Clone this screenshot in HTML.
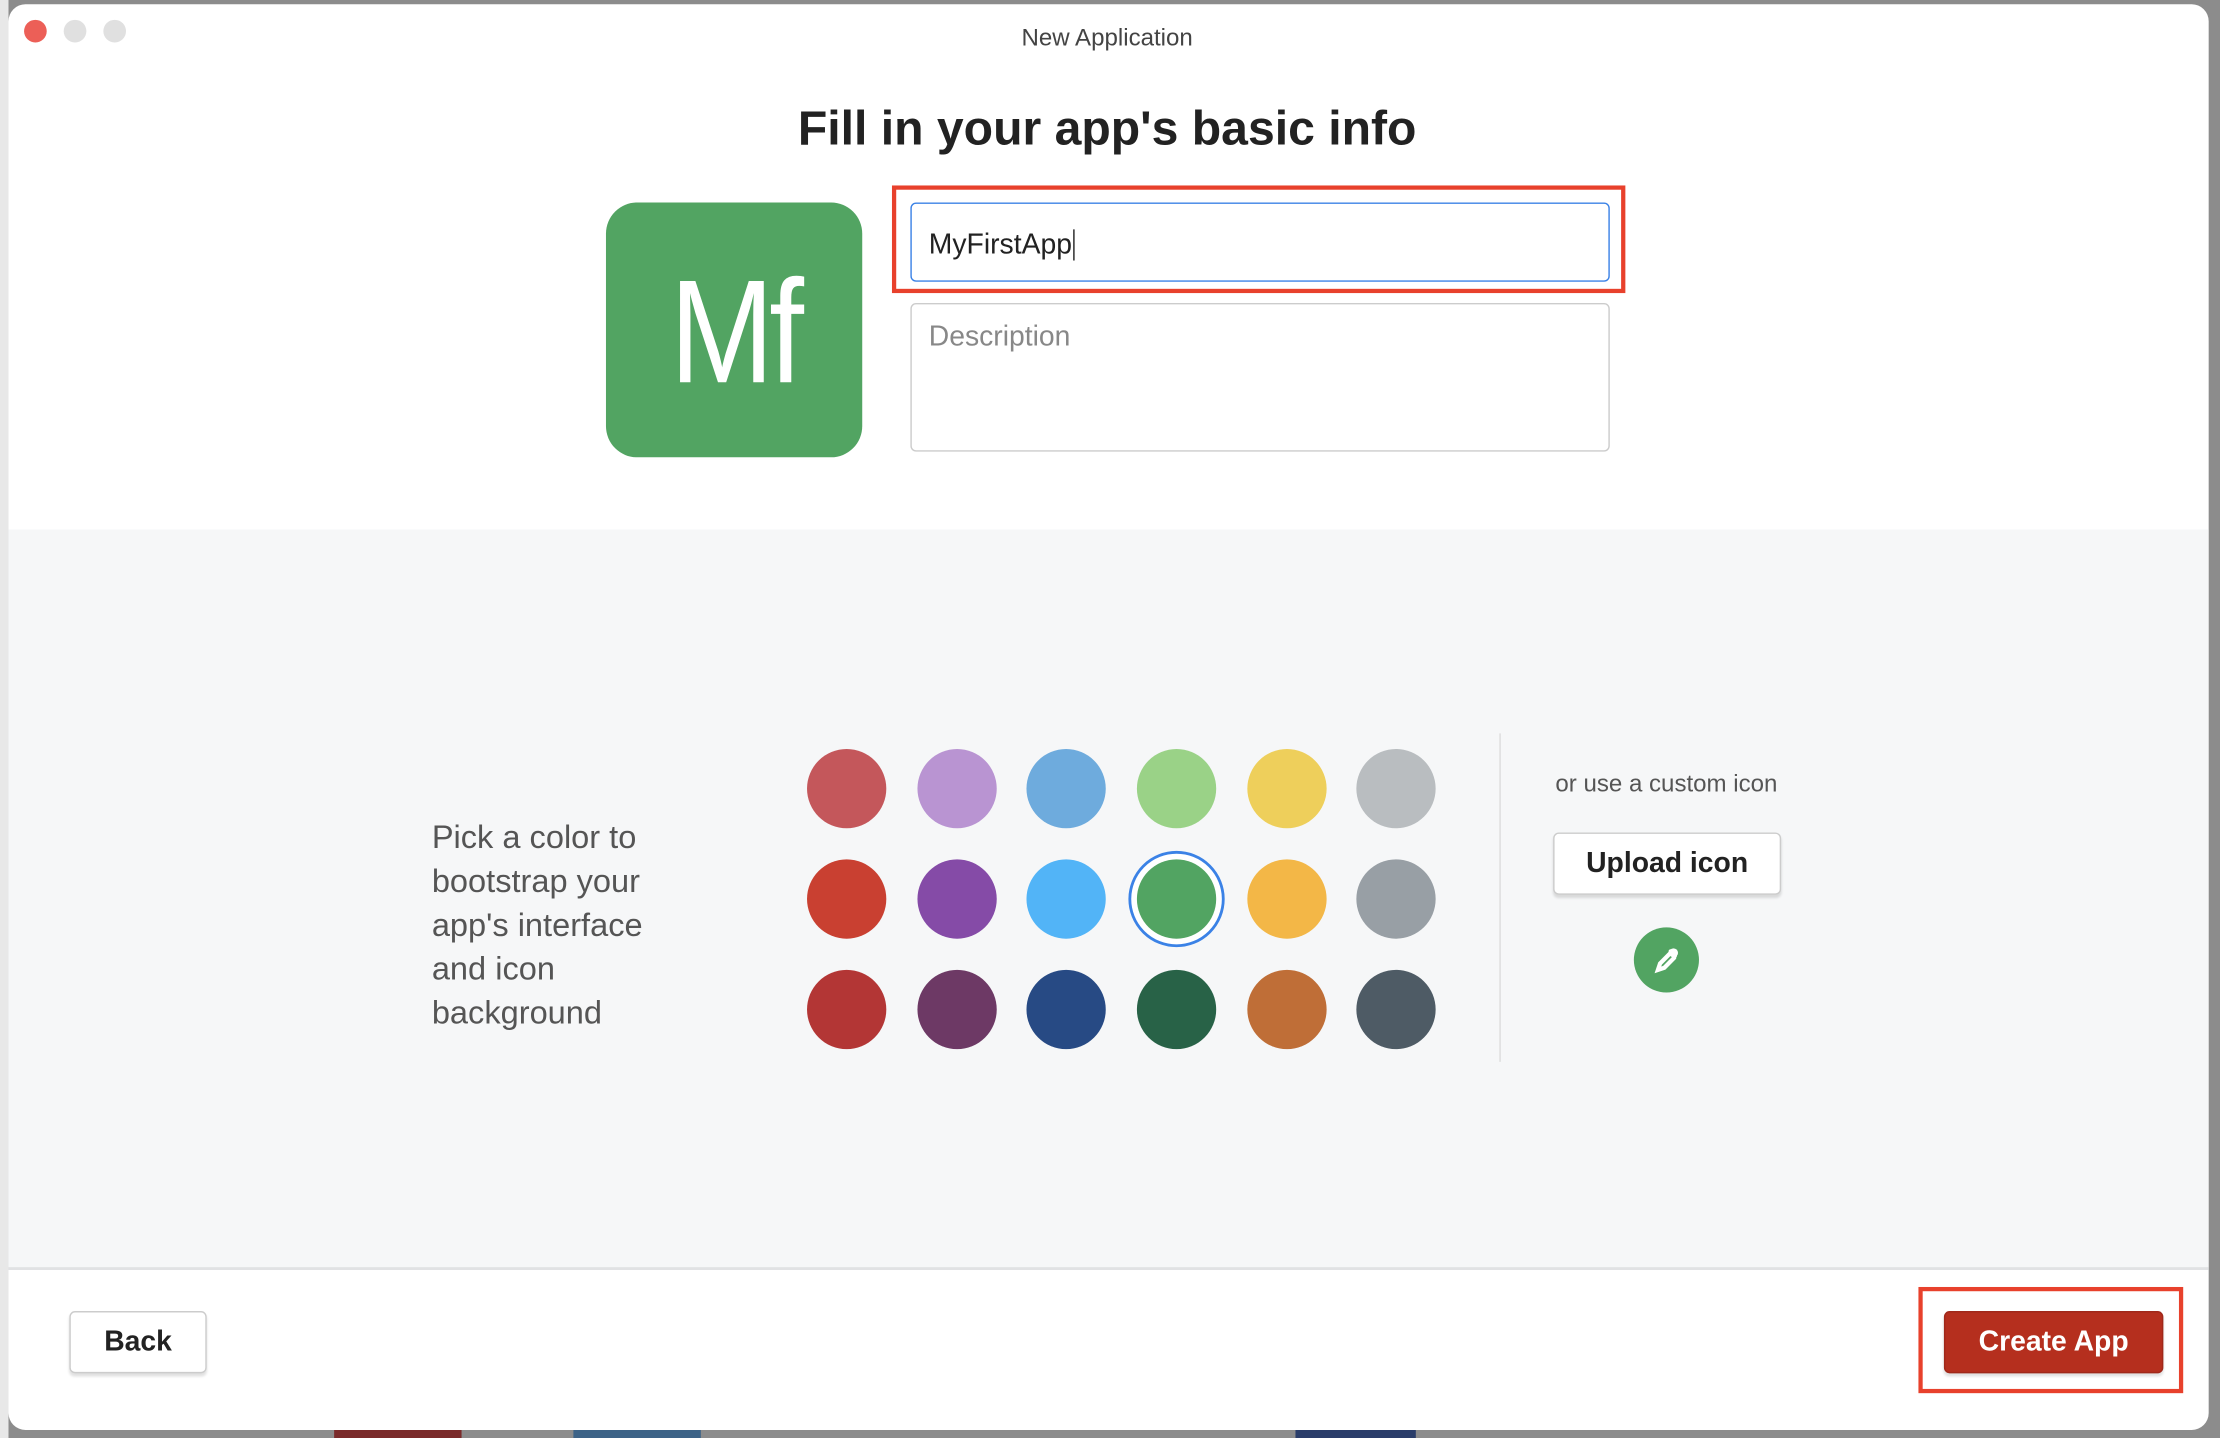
<!DOCTYPE html>
<html><head><meta charset="utf-8"><style>
html,body{margin:0;padding:0;width:2220px;height:1438px;overflow:hidden;background:#8c8c8c;font-family:"Liberation Sans","DejaVu Sans",sans-serif}
#s{position:absolute;left:0;top:0;width:1568px;height:1016px;transform:scale(1.41582);transform-origin:0 0}
.a{position:absolute}
.win{left:6px;top:3px;width:1554px;height:1007px;background:#fff;border-radius:12px;overflow:hidden}
.tl{width:16px;height:16px;border-radius:50%;top:14px}
.c{width:56px;height:56px;border-radius:50%}
.btn{background:#fff;border:1px solid #ccc;border-radius:4px;box-shadow:0 2px 2px rgba(0,0,0,.12);font-weight:bold;font-size:20px;color:#222;display:flex;align-items:center;justify-content:center;box-sizing:border-box}
</style></head><body><div id="s">
<div class="a" style="left:0;top:0;width:6px;height:1016px;background:#e8e8e8"></div>
<div class="a" style="left:236px;top:1008px;width:90px;height:8px;background:#7a2a2a"></div>
<div class="a" style="left:405px;top:1008px;width:90px;height:8px;background:#3d6387"></div>
<div class="a" style="left:915px;top:1008px;width:85px;height:8px;background:#2a3d6a"></div>
<div class="a win">
 <div class="a" style="left:0;top:371px;width:1554px;height:521px;background:#f6f7f8;border-bottom:2px solid #e1e2e4"></div>
</div>
<div class="a tl" style="left:17px;background:#ec5f57"></div>
<div class="a tl" style="left:45px;background:#e0e0e0"></div>
<div class="a tl" style="left:73px;background:#e0e0e0"></div>
<div class="a" style="left:0;width:1564px;top:17px;text-align:center;font-size:17px;color:#444">New Application</div>
<div class="a" style="left:0;width:1564px;top:72px;text-align:center;font-size:34px;font-weight:bold;color:#222">Fill in your app's basic info</div>
<div class="a" style="left:428px;top:143px;width:181px;height:180px;border-radius:22px;background:#52a462;color:#fff;font-size:104px;text-align:center;line-height:184px;letter-spacing:-4px;transform-origin:center"><span style="display:inline-block;transform:scaleX(0.85)">Mf</span></div>
<div class="a" style="left:630px;top:131px;width:518px;height:76px;box-sizing:border-box;border:3px solid #e8412c"></div>
<div class="a" style="left:643px;top:143px;width:494px;height:56px;box-sizing:border-box;border:1.5px solid #3b82e6;border-radius:4px;font-size:20px;color:#222;padding:18px 12px 0">MyFirstApp<span style="border-left:1.5px solid #222;margin-left:1px"></span></div>
<div class="a" style="left:643px;top:214px;width:494px;height:105px;box-sizing:border-box;border:1px solid #ccc;border-radius:4px;font-size:20px;color:#888;padding:12px 12px">Description</div>
<div class="a" style="left:305px;top:576px;font-size:23px;line-height:31px;color:#555">Pick a color to<br>bootstrap your<br>app's interface<br>and icon<br>background</div>
<div class="a c" style="left:570px;top:529px;background:#c4575b"></div>
<div class="a c" style="left:648px;top:529px;background:#b994d2"></div>
<div class="a c" style="left:725px;top:529px;background:#6eabdd"></div>
<div class="a c" style="left:803px;top:529px;background:#9ad287"></div>
<div class="a c" style="left:881px;top:529px;background:#eecf5b"></div>
<div class="a c" style="left:958px;top:529px;background:#b9bdc0"></div>
<div class="a c" style="left:570px;top:607px;background:#c94031"></div>
<div class="a c" style="left:648px;top:607px;background:#854ba7"></div>
<div class="a c" style="left:725px;top:607px;background:#52b4f7"></div>
<div class="a" style="left:797px;top:601px;width:68px;height:68px;border-radius:50%;border:2.5px solid #3b82e6;box-sizing:border-box;background:#fff"></div>
<div class="a" style="left:803px;top:607px;width:56px;height:56px;border-radius:50%;background:#52a462"></div>
<div class="a c" style="left:881px;top:607px;background:#f3b747"></div>
<div class="a c" style="left:958px;top:607px;background:#989fa5"></div>
<div class="a c" style="left:570px;top:685px;background:#b33635"></div>
<div class="a c" style="left:648px;top:685px;background:#6d3965"></div>
<div class="a c" style="left:725px;top:685px;background:#274a84"></div>
<div class="a c" style="left:803px;top:685px;background:#286247"></div>
<div class="a c" style="left:881px;top:685px;background:#bf6e37"></div>
<div class="a c" style="left:958px;top:685px;background:#4e5b65"></div>
<div class="a" style="left:1059px;top:518px;width:1px;height:232px;background:#ddd"></div>
<div class="a" style="left:1077px;width:200px;top:544px;text-align:center;font-size:17px;color:#555">or use a custom icon</div>
<div class="a btn" style="left:1097px;top:588px;width:161px;height:44px">Upload icon</div>
<div class="a" style="left:1154px;top:655px;width:46px;height:46px;border-radius:50%;background:#52a462"></div>
<svg class="a" style="left:1164px;top:665px" width="26" height="26" viewBox="0 0 26 26"><path d="M16 7l3 3M15.5 8.5l-7 7-1.5 4.5 4.5-1.5 7-7" stroke="#fff" stroke-width="3" fill="none" stroke-linecap="round"/><circle cx="18" cy="8" r="3.2" fill="#fff"/></svg>
<div class="a btn" style="left:49px;top:926px;width:97px;height:44px">Back</div>
<div class="a" style="left:1355px;top:909px;width:187px;height:75px;box-sizing:border-box;border:3px solid #e8412c"></div>
<div class="a btn" style="left:1373px;top:926px;width:155px;height:44px;background:#b52f1e;border-color:#a0281a;color:#fff">Create App</div>
</div></body></html>
